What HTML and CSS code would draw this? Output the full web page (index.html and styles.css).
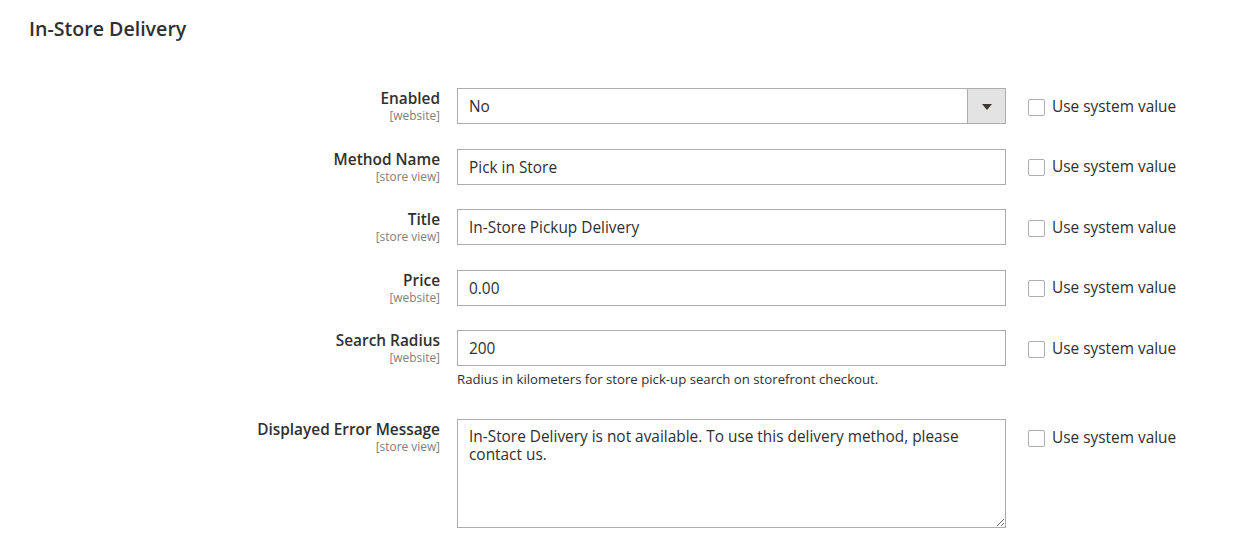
FILE: index.html
```html
<!DOCTYPE html>
<html>
<head>
<meta charset="utf-8">
<link rel="stylesheet" href="styles.css">
</head>
<body>
<div class="page">
  <h2 class="title">In-Store Delivery</h2>
  <div class="form">
    <div class="row">
      <div class="label"><span class="name">Enabled</span><span class="scope">[website]</span></div>
      <div class="control">
        <div class="select"><span class="value">No</span><span class="arrow"></span></div>
      </div>
      <label class="sys"><span class="box"></span>Use system value</label>
    </div>
    <div class="row">
      <div class="label"><span class="name">Method Name</span><span class="scope">[store view]</span></div>
      <div class="control"><div class="input">Pick in Store</div></div>
      <label class="sys"><span class="box"></span>Use system value</label>
    </div>
    <div class="row">
      <div class="label"><span class="name">Title</span><span class="scope">[store view]</span></div>
      <div class="control"><div class="input">In-Store Pickup Delivery</div></div>
      <label class="sys"><span class="box"></span>Use system value</label>
    </div>
    <div class="row">
      <div class="label"><span class="name">Price</span><span class="scope">[website]</span></div>
      <div class="control"><div class="input">0.00</div></div>
      <label class="sys"><span class="box"></span>Use system value</label>
    </div>
    <div class="row">
      <div class="label"><span class="name">Search Radius</span><span class="scope">[website]</span></div>
      <div class="control">
        <div class="input">200</div>
        <p class="note">Radius in kilometers for store pick-up search on storefront checkout.</p>
      </div>
      <label class="sys"><span class="box"></span>Use system value</label>
    </div>
    <div class="row">
      <div class="label"><span class="name">Displayed Error Message</span><span class="scope">[store view]</span></div>
      <div class="control"><textarea class="textarea">In-Store Delivery is not available. To use this delivery method, please contact us.</textarea></div>
      <label class="sys"><span class="box"></span>Use system value</label>
    </div>
  </div>
</div>
</body>
</html>
```

FILE: styles.css
```css
html, body {
  margin: 0;
  padding: 0;
  background: #ffffff;
}
body {
  font-family: "Open Sans", "Liberation Sans", sans-serif;
  color: #303030;
  font-size: 15.4px;
}
.page {
  padding: 17px 0 0 29px;
}
.title {
  margin: 0;
  font-size: 19.6px;
  line-height: 24px;
  font-weight: 600;
  color: #303030;
}
.form {
  margin-top: 47px;
  display: flex;
  flex-direction: column;
  gap: 24.5px;
}
.row {
  display: grid;
  grid-template-columns: 428px 549px auto;
  column-gap: 0;
  align-items: start;
}
.label {
  display: flex;
  flex-direction: column;
  align-items: flex-end;
  padding-right: 17px;
  padding-top: 2px;
  text-align: right;
}
.name {
  font-weight: 600;
  font-size: 15.4px;
  line-height: 18px;
  color: #303030;
}
.scope {
  font-size: 11.9px;
  line-height: 14px;
  color: #808080;
}
.control {
  width: 549px;
}
.input, .select {
  box-sizing: border-box;
  height: 36px;
  border: 1px solid #adadad;
  padding: 1px 11px 0 11px;
  font-size: 15.4px;
  line-height: 33px;
  color: #303030;
  background: #fff;
}
.select {
  display: flex;
  padding-right: 0;
  padding-top: 0;
}
.select .value {
  flex: 1;
  padding-top: 1px;
}
.arrow {
  width: 37px;
  height: 34px;
  background: #e3e3e3;
  border-left: 1px solid #adadad;
  position: relative;
}
.arrow::after {
  content: "";
  position: absolute;
  left: 14px;
  top: 15px;
  border-left: 5px solid transparent;
  border-right: 5px solid transparent;
  border-top: 6px solid #41362f;
}
.note {
  margin: 3px 0 5.5px 0;
  font-size: 13.2px;
  line-height: 20px;
  color: #303030;
}
.textarea {
  display: block;
  box-sizing: border-box;
  width: 549px;
  height: 109px;
  border: 1px solid #adadad;
  border-radius: 0;
  padding: 8px 11px;
  font-family: "Open Sans", "Liberation Sans", sans-serif;
  font-size: 15.4px;
  line-height: 18px;
  color: #303030;
  resize: vertical;
  outline: none;
  margin: 0;
}
.sys {
  display: flex;
  align-items: center;
  height: 36px;
  margin-left: 22px;
  font-size: 15.4px;
  color: #303030;
  white-space: nowrap;
}
.box {
  box-sizing: border-box;
  width: 17px;
  height: 17px;
  border: 1px solid #adadad;
  border-radius: 2px;
  background: #fff;
  margin-right: 7px;
  margin-top: 2px;
}
```
